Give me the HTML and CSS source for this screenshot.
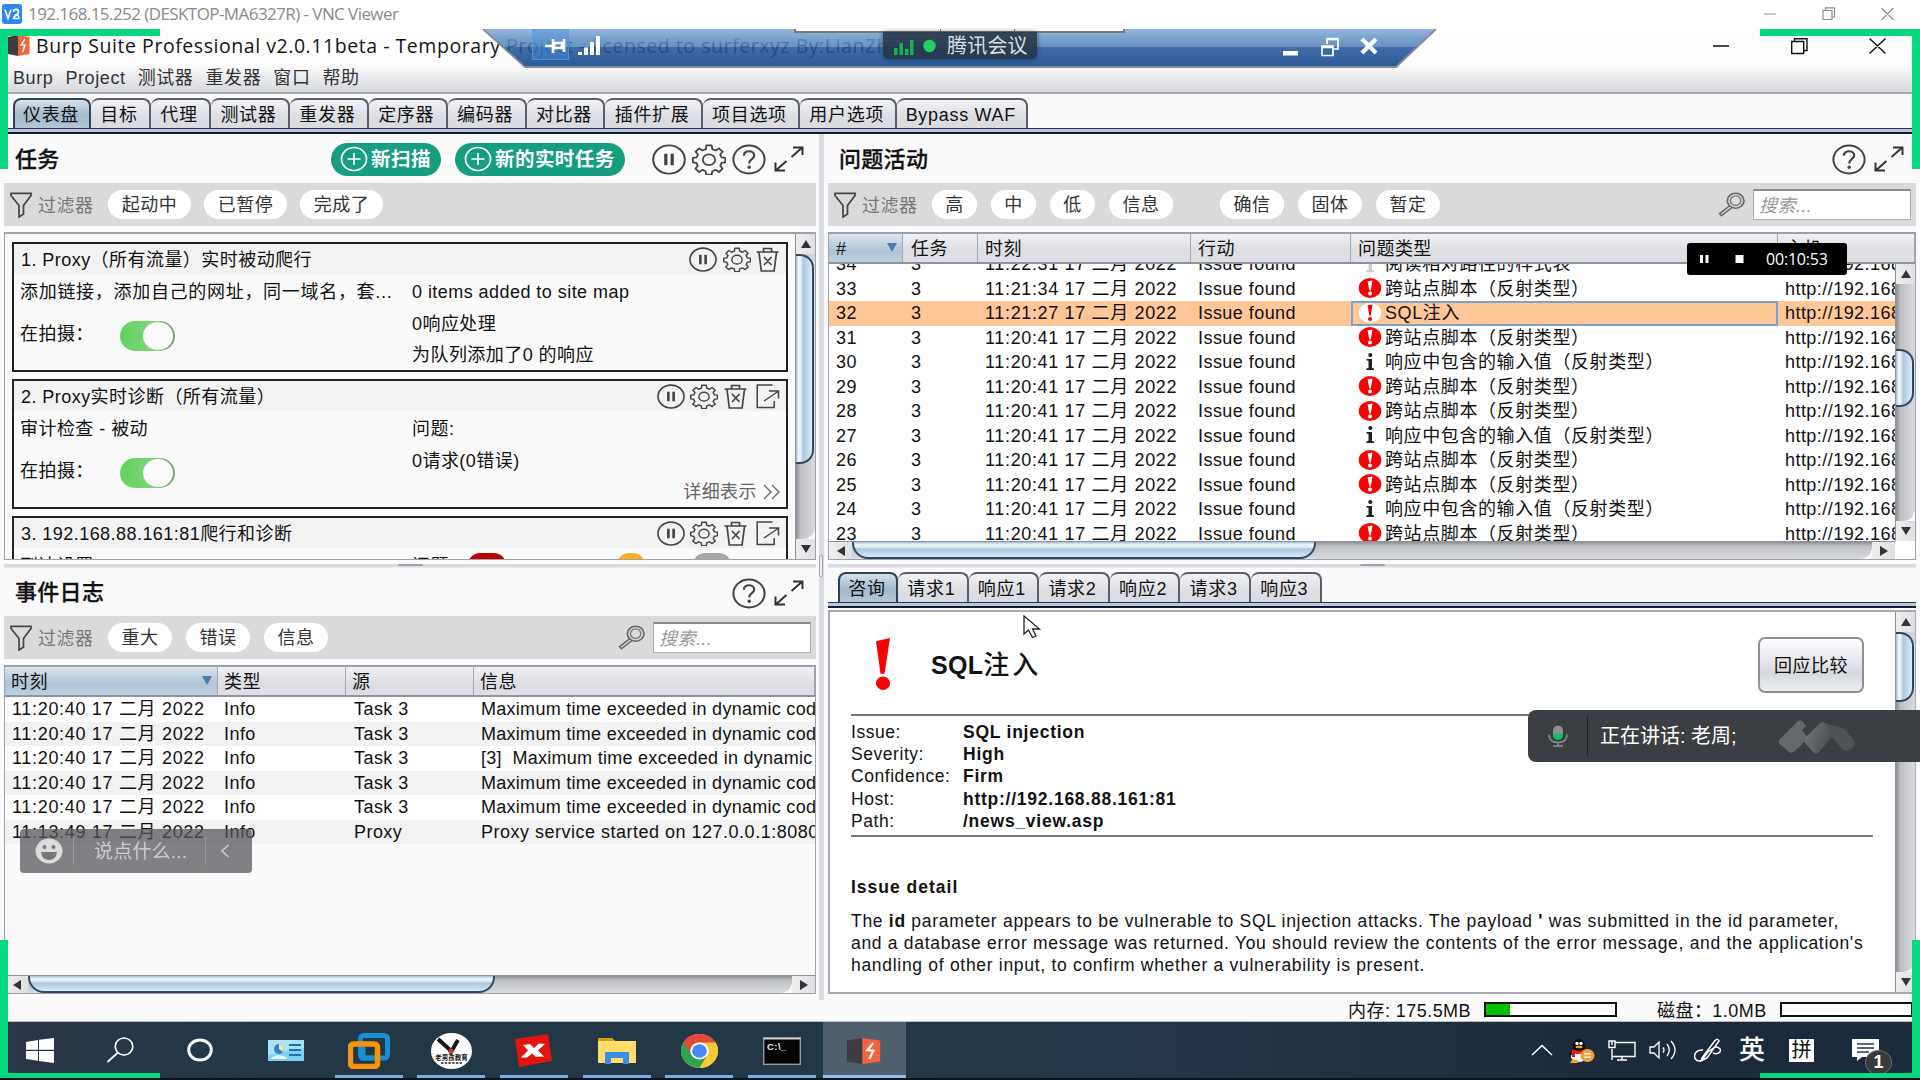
FILE: index.html
```html
<!DOCTYPE html>
<html lang="zh-CN">
<head>
<meta charset="utf-8">
<title>Burp Suite Professional</title>
<link rel="stylesheet" href="styles.css">
</head>
<body>
<svg class="sprite" width="0" height="0" aria-hidden="true">
  <defs>
    <symbol id="pause" viewBox="0 0 34 32" preserveAspectRatio="none"><ellipse cx="17" cy="16" rx="15.8" ry="14.6" fill="none" stroke="#444" stroke-width="2"/><path d="M13.8 10v12M20.2 10v12" stroke="#444" stroke-width="3.2"/></symbol>
    <symbol id="gear" viewBox="0 0 34 32" preserveAspectRatio="none"><path d="M14.3 1.5h5.4l.6 3.8 3.4 1.4 3.2-2.2 3.7 3.4-2.4 3 1.4 3 3.7.5v4.6l-3.7.5-1.4 3 2.4 3-3.7 3.4-3.2-2.2-3.4 1.4-.6 3.6h-5.4l-.6-3.6-3.4-1.4-3.2 2.2-3.7-3.4 2.4-3-1.4-3L.9 19v-4.6l3.7-.5 1.4-3-2.4-3 3.7-3.4 3.2 2.2 3.4-1.4z" fill="none" stroke="#444" stroke-width="1.8" stroke-linejoin="round"/><ellipse cx="17" cy="16.2" rx="6.2" ry="5.6" fill="none" stroke="#444" stroke-width="1.8"/></symbol>
    <symbol id="help" viewBox="0 0 34 32" preserveAspectRatio="none"><ellipse cx="17" cy="16" rx="15.6" ry="14.4" fill="none" stroke="#444" stroke-width="2"/><path d="M11.8 12.2c0-6.4 10.4-6 10.4-.4 0 3.600-5 3.800-5 8.200" fill="none" stroke="#444" stroke-width="2.2"/><circle cx="17.200" cy="24" r="1.700" fill="#444"/></symbol>
    <symbol id="expand" viewBox="0 0 30 26"><path d="M17.500 11 28 1.800M19 1.500h9.500v7.500M12.500 15 2 24.200M1.500 16.500v8H11" fill="none" stroke="#333" stroke-width="2"/></symbol>
    <symbol id="trash" viewBox="0 0 24 25"><path d="M.5 5h22M7.500 5V1.500h8V5M3 5.500l2.300 18.500h12.800L20.500 5.500M8 10l7.500 8M15.500 10 8 18" fill="none" stroke="#444" stroke-width="1.700"/></symbol>
    <symbol id="open" viewBox="0 0 24 25"><path d="M16.500 1H1.200v22.500h17V17M8 17 22 7.500M13 7h9.500v7.500" fill="none" stroke="#444" stroke-width="1.500"/></symbol>
    <symbol id="funnel" viewBox="0 0 22 26"><path d="M1 1.300h20v2.200l-7.500 10V22l-4.500 3V13.500L1 3.500z" fill="none" stroke="#444" stroke-width="1.700"/></symbol>
    <symbol id="mag" viewBox="0 0 26 26" preserveAspectRatio="none"><ellipse cx="17" cy="9" rx="8" ry="7.800" fill="none" stroke="#666" stroke-width="1.600"/><ellipse cx="17" cy="9" rx="5" ry="5" fill="none" stroke="#777" stroke-width="1.300"/><path d="M11.500 14 1.500 22.500l1.800 2.200L13.800 15.800" fill="none" stroke="#666" stroke-width="1.500"/></symbol>
    <symbol id="plus" viewBox="0 0 28 26" preserveAspectRatio="none"><ellipse cx="14" cy="13" rx="12.500" ry="11.500" fill="none" stroke="#fff" stroke-width="1.700"/><path d="M14 7v12M7.500 13h13" stroke="#fff" stroke-width="1.700"/></symbol>
    <symbol id="high" viewBox="0 0 24 20" preserveAspectRatio="none"><ellipse cx="12" cy="10" rx="11.300" ry="9.900" fill="#fb0000"/><path d="M9.600 3.200 14.500 2.600 12.800 12.500h-1.500z" fill="#fff"/><circle cx="12" cy="15.500" r="2" fill="#fff"/></symbol>
    <symbol id="highsel" viewBox="0 0 24 20" preserveAspectRatio="none"><ellipse cx="12" cy="10" rx="11.300" ry="9.900" fill="#fff"/><path d="M9.600 2.200 14.500 1.600 12.800 12.500h-1.500z" fill="#fb0000"/><circle cx="12" cy="16" r="2" fill="#fb0000"/></symbol>
    <symbol id="info" viewBox="0 0 24 20"><circle cx="12.300" cy="3" r="2.100" fill="#222"/><path d="M8.500 7h5.500v9l2 .6v1.400H8.300v-1.400l2.200-.6V8.800L8.500 8.400z" fill="#222"/></symbol>
    <symbol id="infofade" viewBox="0 0 24 20"><path d="M8.500 7h5.500v9l2 .6v1.400H8.300v-1.400l2.200-.6V8.800L8.500 8.400z" fill="#ccc"/></symbol>
    <symbol id="burp" viewBox="0 0 22 21" preserveAspectRatio="none"><path d="M0 2 10 0v21L0 19z" fill="#3e3c3f"/><path d="M10 0 21.500 2v17L10 21z" fill="#f4633b"/><path d="m17 4-4 6h4l-2.500 7" fill="none" stroke="#fff" stroke-width="1.500"/></symbol>
  </defs>
</svg>

<div class="vnc">
  <svg class="vnc-logo" width="20" height="20" viewBox="0 0 20 20"><rect width="20" height="20" rx="3" fill="#2f86f0"/><path d="m3 5.500 3 9 3-9M11.500 8c0-3.500 5-3.500 5 0 0 3-5 3.500-5 6.500h5.500M12.500 11c2.500-.5 4.500.5 4.500 3.500" fill="none" stroke="#fff" stroke-width="1.600"/></svg>
  <span class="vnc-text">192.168.15.252 (DESKTOP-MA6327R) - VNC Viewer</span>
  <svg class="vnc-ctl" width="130" height="14" viewBox="0 0 130 14"><g fill="none" stroke="#8c8c8c" stroke-width="1.200"><path d="M0 7h12M59 3.500h9v9h-9zM61.500 3V.8h9V10h-2M117.500 1l12 12M129.500 1l-12 12"/></g></svg>
</div>

<div class="burp-title">
  <svg width="22" height="21"><use href="#burp"/></svg>
  <span class="bt-text">Burp Suite Professional v2.0.11beta - Temporary Project - licensed to surferxyz By:LianZhang</span>
  <svg class="win-ctl" width="174" height="18" viewBox="0 0 174 18"><g fill="none" stroke="#111" stroke-width="1.400"><path d="M0 9h16M78.700 4.500h12v12h-12zM81.500 4V1.700h12.500V13.500h-3M156.500 1.500l16 15M172.500 1.500l-16 15"/></g></svg>
</div>

<div class="menubar"><span>Burp</span><span>Project</span><span>测试器</span><span>重发器</span><span>窗口</span><span>帮助</span></div>

<div class="tabs main-tabs">
  <div class="tab on w78">仪表盘</div><div class="tab w60">目标</div><div class="tab w60">代理</div><div class="tab w79">测试器</div><div class="tab w79">重发器</div><div class="tab w79">定序器</div><div class="tab w79">编码器</div><div class="tab w79">对比器</div><div class="tab w97">插件扩展</div><div class="tab w97">项目选项</div><div class="tab w97">用户选项</div><div class="tab w131">Bypass WAF</div>
</div>
<div class="tabline"></div>

<div class="work">
  <section class="col left">
    <header class="head">
      <h2>任务</h2>
      <div class="btns"><div class="gbtn b1"><svg width="28" height="26"><use href="#plus"/></svg>新扫描</div><div class="gbtn b2"><svg width="28" height="26"><use href="#plus"/></svg>新的实时任务</div></div>
      <div class="icons"><svg width="34" height="31"><use href="#pause"/></svg><svg width="34" height="31"><use href="#gear"/></svg><svg width="34" height="31"><use href="#help"/></svg><svg width="30" height="26"><use href="#expand"/></svg></div>
    </header>
    <div class="filter"><svg width="22" height="26"><use href="#funnel"/></svg><span class="flabel">过滤器</span><span class="pill w83">起动中</span><span class="pill w83">已暂停</span><span class="pill w83">完成了</span></div>
    <div class="tasklist">
      <div class="cards">
        <article class="card">
          <div class="ctitle"><span>1. Proxy（所有流量）实时被动爬行</span><div class="cicons"><svg width="28" height="25"><use href="#pause"/></svg><svg width="28" height="25"><use href="#gear"/></svg><svg width="24" height="25"><use href="#trash"/></svg></div></div>
          <div class="cbody">
            <div class="cl"><p class="r1 long">添加链接，添加自己的网址，同一域名，套...</p><p class="cap">在拍摄：<span class="toggle"><i></i></span></p></div>
            <div class="cr"><p>0 items added to site map</p><p>0响应处理</p><p>为队列添加了0 的响应</p></div>
          </div>
        </article>
        <article class="card">
          <div class="ctitle"><span>2. Proxy实时诊断（所有流量）</span><div class="cicons"><svg width="28" height="25"><use href="#pause"/></svg><svg width="28" height="25"><use href="#gear"/></svg><svg width="24" height="25"><use href="#trash"/></svg><svg width="24" height="25"><use href="#open"/></svg></div></div>
          <div class="cbody">
            <div class="cl"><p class="r1">审计检查 - 被动</p><p class="cap">在拍摄：<span class="toggle"><i></i></span></p></div>
            <div class="cr"><p>问题:</p><p>0请求(0错误)</p><p class="more">详细表示<svg width="18" height="16" viewBox="0 0 18 16"><path d="m1 1 7 7-7 7M9 1l7 7-7 7" fill="none" stroke="#666" stroke-width="1.300"/></svg></p></div>
          </div>
        </article>
        <article class="card">
          <div class="ctitle"><span>3. 192.168.88.161:81爬行和诊断</span><div class="cicons"><svg width="28" height="25"><use href="#pause"/></svg><svg width="28" height="25"><use href="#gear"/></svg><svg width="24" height="25"><use href="#trash"/></svg><svg width="24" height="25"><use href="#open"/></svg></div></div>
          <div class="cbody third">
            <div class="cl"><p class="r1">到达设置</p></div>
            <div class="cr"><p>问题:<span class="sev red"></span><span class="sev orange"></span><span class="sev gray"></span></p></div>
          </div>
        </article>
      </div>
      <div class="vscroll"><b class="up"></b><div class="track"><div class="thumb t1"></div></div><b class="down"></b></div>
    </div>
    <div class="hsplit"><i class="g1"></i></div>
    <header class="head h44"><h2>事件日志</h2><div class="icons"><svg width="34" height="31"><use href="#help"/></svg><svg width="30" height="26"><use href="#expand"/></svg></div></header>
    <div class="filter"><svg width="22" height="26"><use href="#funnel"/></svg><span class="flabel">过滤器</span><span class="pill w64">重大</span><span class="pill w64">错误</span><span class="pill w64">信息</span><div class="search"><svg width="27" height="25"><use href="#mag"/></svg><div class="sbox">搜索...</div></div></div>
    <div class="events">
      <div class="erow ehead"><span class="sorted">时刻<i></i></span><span>类型</span><span>源</span><span>信息</span></div>
      <div class="ebody">
        <div class="erow"><span>11:20:40 17 二月 2022</span><span>Info</span><span>Task 3</span><span>Maximum time exceeded in dynamic code</span></div>
        <div class="erow"><span>11:20:40 17 二月 2022</span><span>Info</span><span>Task 3</span><span>Maximum time exceeded in dynamic code</span></div>
        <div class="erow"><span>11:20:40 17 二月 2022</span><span>Info</span><span>Task 3</span><span>[3]&nbsp; Maximum time exceeded in dynamic</span></div>
        <div class="erow"><span>11:20:40 17 二月 2022</span><span>Info</span><span>Task 3</span><span>Maximum time exceeded in dynamic code</span></div>
        <div class="erow"><span>11:20:40 17 二月 2022</span><span>Info</span><span>Task 3</span><span>Maximum time exceeded in dynamic code</span></div>
        <div class="erow"><span>11:13:49 17 二月 2022</span><span>Info</span><span>Proxy</span><span class="wide">Proxy service started on 127.0.0.1:8080</span></div>
      </div>
      <div class="hscroll"><b class="lt"></b><div class="track"><div class="thumb t2"></div></div><b class="rt"></b></div>
    </div>
  </section>

  <div class="vsplit"><i></i></div>

  <section class="col right">
    <header class="head"><h2>问题活动</h2><div class="icons"><svg width="34" height="31"><use href="#help"/></svg><svg width="30" height="26"><use href="#expand"/></svg></div></header>
    <div class="filter"><svg width="22" height="26"><use href="#funnel"/></svg><span class="flabel">过滤器</span><span class="pill w45">高</span><span class="pill w45">中</span><span class="pill w45">低</span><span class="pill w64">信息</span><span class="pill w64 gap">确信</span><span class="pill w64">固体</span><span class="pill w64">暂定</span><div class="search"><svg width="27" height="25"><use href="#mag"/></svg><div class="sbox">搜索...</div></div></div>
    <div class="issues">
      <div class="irow ihead"><span class="sorted">#<i></i></span><span>任务</span><span>时刻</span><span>行动</span><span>问题类型</span><span>主机</span></div>
      <div class="imid">
        <div class="ibody">
          <div class="irow"><span>34</span><span>3</span><span>11:22:31 17 二月 2022</span><span>Issue found</span><span><svg width="24" height="20"><use href="#infofade"/></svg>阅读相对路径的样式表</span><span>http://192.168.88</span></div>
          <div class="irow"><span>33</span><span>3</span><span>11:21:34 17 二月 2022</span><span>Issue found</span><span><svg width="24" height="20"><use href="#high"/></svg>跨站点脚本（反射类型）</span><span>http://192.168.88</span></div>
          <div class="irow sel"><span>32</span><span>3</span><span>11:21:27 17 二月 2022</span><span>Issue found</span><span><svg width="24" height="20"><use href="#highsel"/></svg>SQL注入</span><span>http://192.168.88</span></div>
          <div class="irow"><span>31</span><span>3</span><span>11:20:41 17 二月 2022</span><span>Issue found</span><span><svg width="24" height="20"><use href="#high"/></svg>跨站点脚本（反射类型）</span><span>http://192.168.88</span></div>
          <div class="irow"><span>30</span><span>3</span><span>11:20:41 17 二月 2022</span><span>Issue found</span><span><svg width="24" height="20"><use href="#info"/></svg>响应中包含的输入值（反射类型）</span><span>http://192.168.88</span></div>
          <div class="irow"><span>29</span><span>3</span><span>11:20:41 17 二月 2022</span><span>Issue found</span><span><svg width="24" height="20"><use href="#high"/></svg>跨站点脚本（反射类型）</span><span>http://192.168.88</span></div>
          <div class="irow"><span>28</span><span>3</span><span>11:20:41 17 二月 2022</span><span>Issue found</span><span><svg width="24" height="20"><use href="#high"/></svg>跨站点脚本（反射类型）</span><span>http://192.168.88</span></div>
          <div class="irow"><span>27</span><span>3</span><span>11:20:41 17 二月 2022</span><span>Issue found</span><span><svg width="24" height="20"><use href="#info"/></svg>响应中包含的输入值（反射类型）</span><span>http://192.168.88</span></div>
          <div class="irow"><span>26</span><span>3</span><span>11:20:41 17 二月 2022</span><span>Issue found</span><span><svg width="24" height="20"><use href="#high"/></svg>跨站点脚本（反射类型）</span><span>http://192.168.88</span></div>
          <div class="irow"><span>25</span><span>3</span><span>11:20:41 17 二月 2022</span><span>Issue found</span><span><svg width="24" height="20"><use href="#high"/></svg>跨站点脚本（反射类型）</span><span>http://192.168.88</span></div>
          <div class="irow"><span>24</span><span>3</span><span>11:20:41 17 二月 2022</span><span>Issue found</span><span><svg width="24" height="20"><use href="#info"/></svg>响应中包含的输入值（反射类型）</span><span>http://192.168.88</span></div>
          <div class="irow"><span>23</span><span>3</span><span>11:20:41 17 二月 2022</span><span>Issue found</span><span><svg width="24" height="20"><use href="#high"/></svg>跨站点脚本（反射类型）</span><span>http://192.168.88</span></div>
        </div>
        <div class="vscroll"><b class="up"></b><div class="track"><div class="thumb t3"></div></div><b class="down"></b></div>
      </div>
      <div class="ifoot"><div class="hscroll"><b class="lt"></b><div class="track"><div class="thumb t4"></div></div><b class="rt"></b></div></div>
    </div>
    <div class="hsplit"><i class="g2"></i></div>
    <div class="tabs sub-tabs"><div class="tab on w60">咨询</div><div class="tab w71">请求1</div><div class="tab w71">响应1</div><div class="tab w71">请求2</div><div class="tab w71">响应2</div><div class="tab w71">请求3</div><div class="tab w71">响应3</div></div>
    <div class="tabline"></div>
    <div class="advisory">
      <div class="doc">
        <div class="dtop">
          <svg width="16" height="52" viewBox="0 0 16 54" preserveAspectRatio="none"><path d="M1 3.500 15 0 9.500 37h-4z" fill="#fb0000"/><circle cx="8" cy="47" r="7" fill="#fb0000"/></svg>
          <h1>SQL<span>注入</span></h1>
          <div class="cmp">回应比较</div>
        </div>
        <div class="meta"><span>Issue:</span><b>SQL injection</b><span>Severity:</span><b>High</b><span>Confidence:</span><b>Firm</b><span>Host:</span><b>http://192.168.88.161:81</b><span>Path:</span><b>/news_view.asp</b></div>
        <h3>Issue detail</h3>
        <p>The <b>id</b> parameter appears to be vulnerable to SQL injection attacks. The payload <b>'</b> was submitted in the id parameter,</p>
        <p>and a database error message was returned. You should review the contents of the error message, and the application's</p>
        <p>handling of other input, to confirm whether a vulnerability is present.</p>
      </div>
      <div class="vscroll"><b class="up"></b><div class="track"><div class="thumb t5"></div></div><b class="down"></b></div>
    </div>
  </section>
</div>

<div class="status"><span class="mem">内存: 175.5MB</span><div class="bar m"><i></i></div><span class="disk">磁盘：1.0MB</span><div class="bar d"></div></div>

<div class="taskbar">
  <div class="tb start"><svg width="28" height="25" viewBox="0 0 28 25"><path d="M0 4 12 2v9.800H0zM13 1.800 28 0v11.800H13zM0 13h12v9.700L0 21zM13 13h15v12l-15-2z" fill="#fff"/></svg></div>
  <div class="tb find"><svg width="28" height="26" viewBox="0 0 28 26"><ellipse cx="18" cy="9.500" rx="8.800" ry="8.500" fill="none" stroke="#fff" stroke-width="1.700"/><path d="M12 15.500 1.500 25" stroke="#fff" stroke-width="1.800"/></svg></div>
  <div class="tb ring"><svg width="28" height="26" viewBox="0 0 28 26"><ellipse cx="14" cy="13" rx="11.300" ry="10" fill="none" stroke="#f4f4f4" stroke-width="3"/></svg></div>
  <div class="tb app"><svg width="36" height="21" viewBox="0 0 36 21"><rect width="36" height="21" fill="#7fd0f5"/><path d="M0 0h36v8L0 15z" fill="#a9e2fb"/><circle cx="11" cy="9" r="5" fill="#2c82c9"/><path d="M11 9V4a5 5 0 0 1 4 8z" fill="#f5e9a0"/><path d="M3 19c2-5 14-5 16 0z" fill="#e9f8ff"/><path d="M21 5h12M21 10h12M21 15h12" stroke="#1675b5" stroke-width="2.200"/></svg></div>
  <div class="tb app run"><svg width="42" height="36" viewBox="0 0 42 36"><rect x="12.500" y="2.500" width="27" height="22.500" rx="3" fill="none" stroke="#1690cf" stroke-width="5"/><rect x="2.500" y="11" width="27" height="22.500" rx="3" fill="none" stroke="#f6930f" stroke-width="5.500"/><path d="M15 14v11h11" fill="none" stroke="#1690cf" stroke-width="5"/></svg></div>
  <div class="tb app run"><svg width="41" height="36" viewBox="0 0 41 36"><ellipse cx="20.500" cy="18" rx="20.500" ry="18" fill="#fff"/><path d="m7 6 11 10 2 3 7-12" fill="none" stroke="#161616" stroke-width="4"/><circle cx="20" cy="18" r="2.500" fill="#d33"/><text x="20.500" y="27" text-anchor="middle" font-size="6.500" font-weight="bold" letter-spacing="0" fill="#222">老男孩教育</text><path d="M10 30h21" stroke="#222" stroke-width="1.600" stroke-dasharray="2.500 1.200"/></svg></div>
  <div class="tb app run"><svg width="38" height="33" viewBox="0 0 38 33"><path d="m0 5 33-5 4 27-33 6z" fill="#e3150f"/><path d="m8 11 7-1 4 4 5-4.500 6 .5-7 6.500 6 6-8 .5-4-3.500-5 4H6l7-7z" fill="#fff"/></svg></div>
  <div class="tb app run"><svg width="38" height="28" viewBox="0 0 38 28"><path d="M0 1h14l3 3h21v22H0z" fill="#ffdc6b"/><path d="M0 1h14l3 3H0z" fill="#d99a14"/><path d="M7 15h24v12h-6v-6H13v6H7z" fill="#3b8de0"/></svg></div>
  <div class="tb app run"><svg width="37" height="34" viewBox="0 0 36 36" preserveAspectRatio="none"><circle cx="18" cy="18" r="18" fill="#fbc834"/><path d="M18 18 2.400 9A18 18 0 0 0 18 36l7.800-13.500z" fill="#2da44e"/><path d="M18 9h15.600A18 18 0 0 1 18 36l7.800-13.500z" fill="#fbc834"/><path d="M2.400 9A18 18 0 0 1 33.600 9H18a9 9 0 0 0-7.800 13.500z" fill="#e3483b"/><circle cx="18" cy="18" r="9" fill="#fff"/><circle cx="18" cy="18" r="7.200" fill="#4a8af4"/></svg></div>
  <div class="tb app run"><svg width="38" height="28" viewBox="0 0 38 28"><rect x=".7" y=".7" width="36.600" height="26.600" fill="#050505" stroke="#9a9a9a" stroke-width="1.400"/><path d="M1 1.800h36" stroke="#d0d0d0" stroke-width="1.500"/><text x="4" y="13" font-size="9.500" font-weight="bold" fill="#eee">C:\_</text></svg></div>
  <div class="tb app run active"><svg width="34" height="26"><use href="#burp"/></svg></div>
  <div class="tray">
    <svg width="22" height="12" viewBox="0 0 22 12"><path d="m1 11 10-9.500L21 11" fill="none" stroke="#fff" stroke-width="1.600"/></svg>
    <svg class="qq" width="29" height="25" viewBox="0 0 29 25"><ellipse cx="12" cy="17" rx="8.500" ry="7" fill="#f6f6f6"/><path d="M3 19c-2-3 1-7 3-8 0-6 2-10 6-10s6 4 6 10l2 3-4 1H6z" fill="#0c0c0c"/><circle cx="10" cy="5.500" r="1.700" fill="#fff"/><circle cx="14" cy="5.500" r="1.700" fill="#fff"/><ellipse cx="12" cy="9" rx="3.500" ry="1.300" fill="#f7a51b"/><path d="M5 11q7 3.500 14 0v3q-7 3-11 1.500V19H5z" fill="#db2020"/><path d="M5 22h6v3H3z" fill="#f7a51b"/><ellipse cx="20.500" cy="17.500" rx="7" ry="6.500" fill="#ff9838"/><path d="M17 15.800h7M17 19.200h7" stroke="#fff" stroke-width="1.400"/></svg>
    <svg class="mon" width="28" height="21" viewBox="0 0 28 21"><path d="M7 2.500h20v14H4.500M4 9v11M14 17v3M9 20h10M1 1h6v6.500H1zM4 1v4" fill="none" stroke="#fff" stroke-width="1.400"/></svg>
    <svg class="spk" width="28" height="22" viewBox="0 0 28 22"><path d="M1 8h4l5-5v16l-5-5H1zM14 8.500q2 2.500 0 5M18 5q4.500 6 0 12M22 2q8 9 0 18" fill="none" stroke="#fff" stroke-width="1.300"/></svg>
    <svg class="pen" width="28" height="24" viewBox="0 0 28 24"><path d="M8 20 21 2.500q3-2.500 4 .5L13 20l-6 3zM9 12C-2 12-1 23 5 23c5 0 6-7 10-10 5-3 7-6 11-2 2 3-3 6-7 4" fill="none" stroke="#fff" stroke-width="1.500"/></svg>
    <span class="ying">英</span>
    <span class="pin">拼</span>
    <div class="note"><svg width="27" height="22" viewBox="0 0 27 22"><path d="M0 0h27v18H10l-5 4v-4H0z" fill="#fff"/><path d="M5 5h17M5 9h17M5 13h12" stroke="#26364a" stroke-width="1.500"/></svg><em>1</em></div>
  </div>
</div>

<div class="rdp">
  <svg class="rdp-bg" width="956" height="39" viewBox="0 0 956 39"><defs><linearGradient id="rb" x1="0" y1="0" x2="0" y2="1"><stop offset="0" stop-color="#94b7df"/><stop offset=".46" stop-color="#4b7cb6" stop-opacity=".82"/><stop offset=".48" stop-color="#225598" stop-opacity=".86"/><stop offset="1" stop-color="#255594" stop-opacity=".97"/></linearGradient></defs><path d="M1 0h953l-40 38H43z" fill="url(#rb)"/><path d="M1 0l42 38h871l40-38" fill="none" stroke="#858b94" stroke-width="1.800"/></svg>
  <div class="pinbox"><svg width="22" height="16" viewBox="0 0 22 16"><path d="M0 8h8M8 1v14M9 5h8v5H9zM19 1v13" fill="none" stroke="#fff" stroke-width="2.600"/></svg></div>
  <svg class="sig" width="22" height="19" viewBox="0 0 22 19"><path d="M0 16h4v3H0zM6 11.500h4V19H6zM12 6h4v13h-4zM18 0h4v19h-4z" fill="#fff"/></svg>
  <div class="tipbox"><i></i><i></i></div>
  <svg class="rc" width="96" height="20" viewBox="0 0 96 20"><path d="M0 14h15v4.500H0z" fill="#fff"/><path d="M39 9h11v9.500H39zM39 10.500h11M44 7V1.500h11V12h-4M44 2.500h11" fill="none" stroke="#fff" stroke-width="1.700"/><path d="m79 2 14 14M93 2 79 16" stroke="#fff" stroke-width="4.200"/></svg>
</div>
<div class="badge"><svg width="43" height="18" viewBox="0 0 43 18"><path d="M0 11h3.500v7H0zM5.500 6H9v12H5.500zM11 12h3.500v6H11zM16 3h3.500v15H16z" fill="#14b356"/><circle cx="35.500" cy="9" r="6.200" fill="#25d060"/></svg><span>腾讯会议</span></div>

<div class="recorder"><svg width="44" height="9" viewBox="0 0 44 9"><path d="M0 0h3v8H0zM5.500 0h3v8h-3zM35.500 0h8v8h-8z" fill="#fff"/></svg><span>00:10:53</span></div>
<div class="speech"><svg width="20" height="22" viewBox="0 0 20 22"><path d="M5 6a5 5.500 0 0 1 10 0v3H5z" fill="#8e9193"/><path d="M5 8.500h10V10a5 5 0 0 1-10 0z" fill="#12bf62"/><path d="M1 9.500q0 8 9 8t9-8M10 17.500v3M5 21h10" fill="none" stroke="#8e9193" stroke-width="1.500"/></svg><span class="st">正在讲话: 老周;</span><svg class="dia" width="80" height="38" viewBox="0 0 80 38"><defs><linearGradient id="dg" x1="0" y1="0" x2="1" y2=".3"><stop offset="0" stop-color="#77797b"/><stop offset="1" stop-color="#4a4d50"/></linearGradient></defs><path d="M2 22q-3 4 1 6l8 7q3 2 6-1l13-13-6-8 4-4-4-5q-2-2-5 1z" fill="#66696b"/><path d="m27 21 14-14q3-3 6-1l10 10-16 19q-3 3-6 0l-7-8q-3-3-1-6z" fill="url(#dg)"/><path d="m47 6 20 6 9 12q2 4-2 7-6 6-11 0l-9-11z" fill="#505356"/></svg></div>
<div class="chat"><svg width="28" height="26" viewBox="0 0 28 26"><ellipse cx="14" cy="13" rx="13.500" ry="12.500" fill="#dcdcdc"/><circle cx="9.500" cy="9" r="2" fill="#777"/><circle cx="18.500" cy="9" r="2" fill="#777"/><path d="M6 14h16q-1 8-8 8t-8-8z" fill="#777"/></svg><span>说点什么...</span><svg class="lt2" width="10" height="14" viewBox="0 0 10 14"><path d="M8.500 1 2 7l6.500 6" fill="none" stroke="#ccc" stroke-width="1.500"/></svg></div>
<svg class="cursor" width="18" height="24" viewBox="0 0 18 24"><path d="M1 1v18l4.500-4 4 7.500 3.500-1.500-3.500-7h7z" fill="#fff" stroke="#222" stroke-width="1.300"/></svg>
<i class="corner tl"></i><i class="corner tr"></i><i class="corner bl"></i><i class="corner br"></i>
</body>
</html>
```
FILE: styles.css
```css
* { box-sizing: border-box; margin: 0; padding: 0; }
body { width: 1920px; height: 1080px; overflow: hidden; position: relative; background: #fafafa; color: #111; font: 18px/24px "Liberation Sans", "Noto Sans CJK SC", sans-serif; letter-spacing: .45px; display: flex; flex-direction: column; white-space: nowrap; }
svg { display: block; flex: none; }
.sprite { position: absolute; }
.w45 { width: 45px; } .w60 { width: 60px; } .w64 { width: 64px; } .w71 { width: 70.600px; } .w78 { width: 78px; } .w79 { width: 78.900px; } .w83 { width: 83px; } .w97 { width: 97.300px; } .w131 { width: 131px; }

.vnc { flex: none; height: 29px; background: #fff; display: flex; align-items: center; padding: 0 26px 1px 2px; font: 17px/24px "Open Sans", sans-serif; color: #8a8a8a; letter-spacing: -.57px; }
.vnc-text { margin-left: 6px; flex: 1; }
.burp-title { flex: none; height: 35px; background: #fefefe; display: flex; align-items: center; padding: 0 33px 2px 8px; font: 19.500px/24px "Open Sans", "Noto Sans CJK SC", sans-serif; color: #151515; letter-spacing: .55px; }
.bt-text { margin-left: 6px; flex: 1; }
.menubar { flex: none; height: 30px; background: linear-gradient(#fefefe, #e9eaed 50%, #d4d7dc); border-bottom: 2px solid #a7a9af; display: flex; align-items: center; padding-left: 13px; gap: 12px; color: #333; letter-spacing: .6px; }

.tabs { flex: none; display: flex; align-items: flex-end; letter-spacing: .7px; }
.main-tabs { height: 34px; padding-left: 13px; }
.sub-tabs { height: 30px; padding-left: 10px; }
.tab { flex: none; height: 30px; line-height: 30px; text-align: center; padding-right: 2px; border: 2px solid #5c5f69; border-bottom: 0; border-left-width: 0; border-radius: 8px 8px 0 0; background: linear-gradient(#f2f2f5, #dcdee4 60%, #d9dbe1); }
.tab.on { border-left-width: 2px; background: linear-gradient(#d5e1ea, #a4b9ca 55%, #b3c7d8); border-color: #2f4358; }
.tabline { flex: none; height: 6px; background: #b5c8de; border-top: 1px solid #33363f; border-bottom: 2px solid #151b2c; }

.work { flex: none; height: 866px; display: grid; grid-template-columns: 812px 12px 1088px; padding-left: 4px; }
.col { display: flex; flex-direction: column; min-width: 0; height: 860px; }
.head { flex: none; height: 49px; display: flex; align-items: center; padding: 0 12px 0 11px; position: relative; }
.head > * { margin-top: 1px; }
.head > h2 { margin-top: 3px; }
.h44 { height: 44px; }
.h44 > *, .h44 > h2 { margin-top: -2px; }
h2 { font-size: 22px; letter-spacing: .3px; line-height: 28px; font-weight: 500; -webkit-text-stroke: .3px #111; }
.btns { display: flex; gap: 14px; margin-left: auto; margin-right: 27px; }
.gbtn { height: 33px; border-radius: 17px; background: #169e80; color: #fff; font-size: 19.500px; font-weight: bold; display: flex; align-items: center; gap: 3px; padding-left: 9px; }
.b1 { width: 110px; } .b2 { width: 170px; }
.icons { display: flex; align-items: center; gap: 6px; margin-left: auto; }
.icons svg:last-child { margin-left: 2px; }
.btns + .icons { margin-left: 0; }
.filter { flex: none; height: 43px; background: #dadada; display: flex; align-items: center; padding-left: 6px; margin-bottom: 6px; }
.flabel { color: #777; margin: 2px 15px 0 6px; width: 55px; }
.pill { height: 29px; border-radius: 15px; background: #fff; color: #333; text-align: center; line-height: 31px; margin-right: 14px; }
.pill.gap { margin-left: 33px; }
.left .pill { margin-right: 13px; }
.left .w64 { margin-right: 14px; }
.search { margin-left: auto; display: flex; align-items: center; gap: 8px; margin-right: 5px; }
.sbox { width: 158px; height: 31px; background: #fff; border: 1px solid #b0b0b0; border-top: 2px solid #8c8c8c; font-style: italic; color: #999; padding-left: 5px; line-height: 30px; }

.tasklist { flex: none; height: 328px; border: 1px solid #9ea1ac; display: flex; width: 812px; }
.left .tasklist, .left .events { border-top-width: 2px; }
.cards { flex: 1; overflow: hidden; padding: 8px 7px 0 7px; display: flex; flex-direction: column; gap: 7px; }
.card { flex: none; height: 130px; border: 2px solid #222; }
.ctitle { height: 30px; background: #f2f2f2; display: flex; justify-content: space-between; align-items: center; padding: 1px 6px 0 7px; }
.cicons { display: flex; gap: 5.500px; margin-top: -1px; }
.cicons svg:nth-child(3):not(:last-child) { margin-right: 3px; }
.cbody { display: flex; padding: 6px 0 0 6px; }
.cl { width: 392px; }
.r1 { line-height: 24px; }
.r1.long { letter-spacing: .7px; }
.cap { display: flex; height: 57px; align-items: center; padding-top: 2px; }
.toggle { width: 55px; height: 30px; border-radius: 15px; background: linear-gradient(90deg, #62d15c, #7bd67a 60%, #73a473); margin-left: 26px; display: flex; justify-content: flex-end; padding: 1px 2px; margin-top: 4px; }
.toggle i { width: 30px; height: 28px; border-radius: 50%; background: #fcfcfc; }
.cr { flex: 1; display: flex; flex-direction: column; gap: 7.500px; }
.more { display: flex; justify-content: flex-end; align-items: center; gap: 6px; color: #666; padding-right: 5px; }
.third .cr p { display: flex; }
.sev { height: 24px; border-radius: 12px; margin-top: -1px; width: 38px; }
.sev.red { background: #b70404; margin-left: 14px; } .sev.orange { background: #ffae19; width: 28px; margin-left: 111px; } .sev.gray { background: #a6a8a8; margin-left: 48px; }

.vscroll { width: 20px; flex: none; display: flex; flex-direction: column; border-left: 1px solid #8f929b; }
.vscroll b, .hscroll b { flex: none; display: grid; place-items: center; background: linear-gradient(90deg, #eee, #dfe0e3); }
.vscroll b { height: 20px; }
.vscroll b::after { content: ""; border: 5px solid transparent; }
.vscroll .up::after { border-bottom: 8px solid #333; border-top: 0; }
.vscroll .down::after { border-top: 8px solid #333; border-bottom: 0; }
.track { flex: 1; background: linear-gradient(90deg, #8d9095, #bfc1c5 25%, #d9dadf); border-radius: 0 0 12px 0; }
.vscroll .thumb { width: 18px; border: 2px solid #33485f; border-left: 0; border-radius: 0 14px 14px 0; background: linear-gradient(90deg, #a2bdd5, #f2f8fc 18%, #e4eff7 30%, #adc6dc 45%, #d9eefa); }
.hscroll { display: flex; height: 18px; flex: 1; border-top: 1px solid #8f929b; }
.hscroll b { width: 23px; }
.hscroll b::after { content: ""; border: 5px solid transparent; }
.hscroll .lt::after { border-right: 8px solid #333; border-left: 0; }
.hscroll .rt::after { border-left: 8px solid #333; border-right: 0; }
.hscroll .track { background: linear-gradient(#8d9095, #bfc1c5 25%, #d9dadf); }
.hscroll .thumb { height: 17px; border: 2px solid #33485f; border-top: 0; border-radius: 0 0 16px 16px; background: linear-gradient(#a2bdd5, #edf5fa 18%, #dde9f3 35%, #abc5db 48%, #d5ecfa); }
.t1 { height: 210px; } .t3 { height: 58px; margin-top: 65px; } .t5 { height: 70px; }
.t2 { width: 467px; } .t4 { width: 464px; }

.hsplit { flex: none; height: 12px; padding-top: 4px; background: linear-gradient(#fafafa 4px, #d8dbe1 4px, #d8dbe1 7px, #fafafa 8px); }
.hsplit i { display: block; width: 25px; height: 3px; border-top: 2px solid #9ca3ae; border-radius: 2px; }
.g1 { margin-left: 394px; } .g2 { margin-left: 532px; }
.vsplit { margin-left: 3px; width: 5px; background: #d8dbe1; padding-top: 421px; }
.vsplit i { display: block; width: 4px; height: 22px; border: 1px solid #9ca3ae; border-radius: 2px; background: #eee; }

.events { flex: none; height: 329px; border: 1px solid #9ea1ac; display: flex; flex-direction: column; overflow: hidden; }
.erow { display: grid; grid-template-columns: 213px 128px 128px 1fr; height: 24.500px; line-height: 24.500px; }
.erow > span, .irow > span { overflow: hidden; padding-left: 7px; }
.ehead, .ihead { flex: none; background: linear-gradient(#f1f1f4, #dcdee4 60%, #dddfe5); border-bottom: 2px solid #8f939c; }
.erow.ehead, .irow.ihead { height: 30px; line-height: 30px; }
.ehead > span, .ihead > span { border-right: 1px solid #a4a7b0; }
.erow.ehead > span { padding-left: 6px; }
.sorted { background: linear-gradient(#dbe6ee, #afc4d6 60%, #bdd0e0); position: relative; }
.sorted i { position: absolute; right: 5px; top: 9px; border: 5px solid transparent; border-top: 9px solid #4a7cb0; border-bottom: 0; }
.ebody { flex: 1; overflow: hidden; }
.ebody .erow > span:nth-child(1) { letter-spacing: .68px; }
.ebody .erow > span:nth-child(2) { padding-left: 6px; }
.ebody .erow > span:nth-child(3) { padding-left: 8px; }
.ebody .erow > span:nth-child(4) { letter-spacing: .28px; }
.ebody .erow > span.wide { letter-spacing: .5px; }
.ebody .erow:nth-child(odd) { background: #fff; }
.ebody .erow:nth-child(even) { background: #f2f2f2; }
.events .hscroll { flex: none; }

.issues { flex: none; height: 328px; border: 1px solid #9ea1ac; border-top-width: 2px; display: flex; flex-direction: column; background: #fff; }
.irow { display: grid; grid-template-columns: 74px 75px 213px 160px 427px 1fr; height: 24.500px; line-height: 24.500px; }
.imid { flex: 1; display: flex; min-height: 0; }
.ibody { flex: 1; overflow: hidden; }
.ibody .irow:first-child { margin-top: -12px; }
.ibody .irow > span:nth-child(5) { display: flex; align-items: center; gap: 3px; letter-spacing: .6px; }
.ibody svg { margin-top: -1px; }
.irow > span:nth-child(3) { padding-left: 7px; }
.ibody .irow > span:nth-child(3) { letter-spacing: .65px; }
.irow > span:nth-child(2) { padding-left: 8px; }
.irow.sel { background: #ffc698; }
.irow.sel > span:nth-child(5) { outline: 2px solid #7ba3c6; outline-offset: -2px; }
.ifoot { flex: none; height: 18px; padding-right: 20px; display: flex; }

.advisory { flex: none; height: 384px; margin-top: 2px; border: 2px solid #a9abb4; border-right-width: 1px; background: #fff; display: flex; }
.doc { flex: 1; padding: 26px 22px 0 21px; }
.dtop { display: flex; height: 76px; align-items: flex-start; padding-left: 24px; }
.doc h1 { font-size: 25px; line-height: 30px; letter-spacing: .3px; margin: 12px 0 0 40px; flex: 1; }
.doc h1 span { font-size: 26px; letter-spacing: 3px; font-weight: 500; }
.cmp { width: 106px; height: 56px; margin-right: 9px; border: 2px solid #8d9097; border-radius: 7px; background: linear-gradient(#fdfdfe, #e4e6ea 45%, #d5d8de 65%, #eceef2); text-align: center; line-height: 55px; margin-top: -1px; }
.meta { border-top: 2px solid #777; border-bottom: 2px solid #777; display: grid; grid-template-columns: 112px 1fr; height: 123px; padding-top: 5px; line-height: 22.200px; grid-auto-rows: 22.200px; font-size: 17.500px; letter-spacing: .55px; }
.meta b { letter-spacing: .75px; }
h3 { font-size: 17.500px; margin: 39px 0 12px; line-height: 22px; letter-spacing: 1px; }
.doc p { font-size: 17.500px; line-height: 22.200px; letter-spacing: .7px; }

.status { flex: none; height: 22px; background: #fafafa; border-bottom: 1px solid #bbb; display: flex; align-items: center; padding-left: 1348px; line-height: 20px; }
.mem { width: 136px; } .disk { width: 123px; margin-left: 40px; }
.bar { width: 133px; height: 15px; border: 2px solid #111; background: #fff; margin-top: -3px; }
.bar i { display: block; width: 24px; height: 100%; background: #00c000; }

.taskbar { flex: none; height: 56px; display: flex; background: linear-gradient(90deg, #2b3647, #223846 15%, #223846 40%, #25364a 60%, #1b2b3c 85%); padding-left: 8px; align-items: stretch; box-shadow: 0 2px #0d131b; }
.tb { display: flex; align-items: center; justify-content: center; flex: none; }
.start { width: 64px; } .find { width: 95px; } .ring { width: 66px; margin-right: 12px; }
.app { width: 82.600px; padding: 0 7px; }
.app svg { margin-top: 1px; }
.run { background: linear-gradient(#76aee8, #76aee8) center bottom / 68px 3px no-repeat; }
.run.active { background: linear-gradient(#8fc1f2, #8fc1f2) center bottom / 100% 3px no-repeat #505f6e; }
.tray { margin-left: auto; display: flex; align-items: center; color: #fff; padding-right: 41px; }
.qq { margin-left: 14px; } .mon { margin-left: 12px; } .spk { margin-left: 13px; } .pen { margin-left: 17px; }
.ying { font-size: 26px; font-weight: 500; margin-left: 17px; letter-spacing: 0; }
.pin { width: 25px; height: 23px; background: #fff; color: #111; font-size: 20px; line-height: 22px; margin-left: 24px; letter-spacing: 0; text-align: center; }
.note { margin-left: 38px; position: relative; }
.note em { position: absolute; left: 13px; top: 11px; width: 27px; height: 25px; border-radius: 50%; background: #39393c; border: 1.500px solid #6b6d70; font: bold 18px/22px "Liberation Sans", sans-serif; text-align: center; letter-spacing: 0; }

.rdp { position: absolute; left: 482px; top: 29px; width: 956px; height: 39px; }
.rdp-bg { position: absolute; }
.pinbox { position: absolute; left: 50px; top: 0; width: 37px; height: 31px; background: rgba(74, 144, 214, .45); border: 1px solid rgba(90, 160, 225, .6); display: grid; place-items: center; padding: 3px 0 0 10px; }
.sig { position: absolute; left: 96px; top: 7px; }
.tipbox { position: absolute; left: 312px; top: 0; width: 331px; height: 4px; background: #fff; border: 2px solid #777; border-top: 0; display: flex; gap: 73px; padding-left: 144px; }
.tipbox i { width: 1px; height: 2px; background: #777; }
.rc { position: absolute; left: 801px; top: 8px; }
.badge { position: absolute; left: 883px; top: 32px; width: 154px; height: 27px; border-radius: 0 0 5px 5px; background: rgba(38, 53, 70, .88); box-shadow: 0 0 5px rgba(20, 40, 70, .6); display: flex; align-items: center; padding: 0 0 0 11px; gap: 10px; color: #d8dde2; font-size: 20px; letter-spacing: .2px; }

.recorder { position: absolute; left: 1687px; top: 243px; width: 160px; height: 32px; border-radius: 3px; background: #000; color: #fff; display: flex; align-items: center; padding-left: 13px; gap: 22px; font: 16px/30px "Open Sans", sans-serif; letter-spacing: -.2px; }
.speech { position: absolute; left: 1528px; top: 710px; width: 392px; height: 52px; border-radius: 8px 0 0 8px; background: #3b3e42; color: #fff; display: flex; align-items: center; padding-left: 20px; font-size: 20px; letter-spacing: 0; }
.st { margin-left: 19px; border-left: 1px solid #222; padding-left: 12px; height: 40px; line-height: 41px; width: 191px; }
.chat { position: absolute; left: 20px; top: 829px; width: 232px; height: 44px; border-radius: 4px; background: rgba(85, 87, 90, .74); color: #ccc; display: flex; align-items: center; padding-left: 15px; }
.chat span { margin-left: 10px; border: 1px solid #999; border-width: 0 1px; width: 133px; height: 28px; line-height: 30px; padding-left: 20px; font-size: 19px; letter-spacing: .2px; }
.lt2 { margin-left: 14px; }
.cursor { position: absolute; left: 1023px; top: 615px; }

.corner { position: absolute; border: 0 solid #07d87f; }
.tl { left: 0; top: 29px; width: 160px; height: 140px; border-top-width: 7px; border-left-width: 8px; }
.tr { right: 0; top: 29px; width: 160px; height: 140px; border-top-width: 7px; border-right-width: 8px; }
.bl { left: 0; top: 940px; width: 160px; height: 138px; border-bottom-width: 5px; border-left-width: 8px; }
.br { right: 0; top: 940px; width: 160px; height: 138px; border-bottom-width: 5px; border-right-width: 8px; }
```
